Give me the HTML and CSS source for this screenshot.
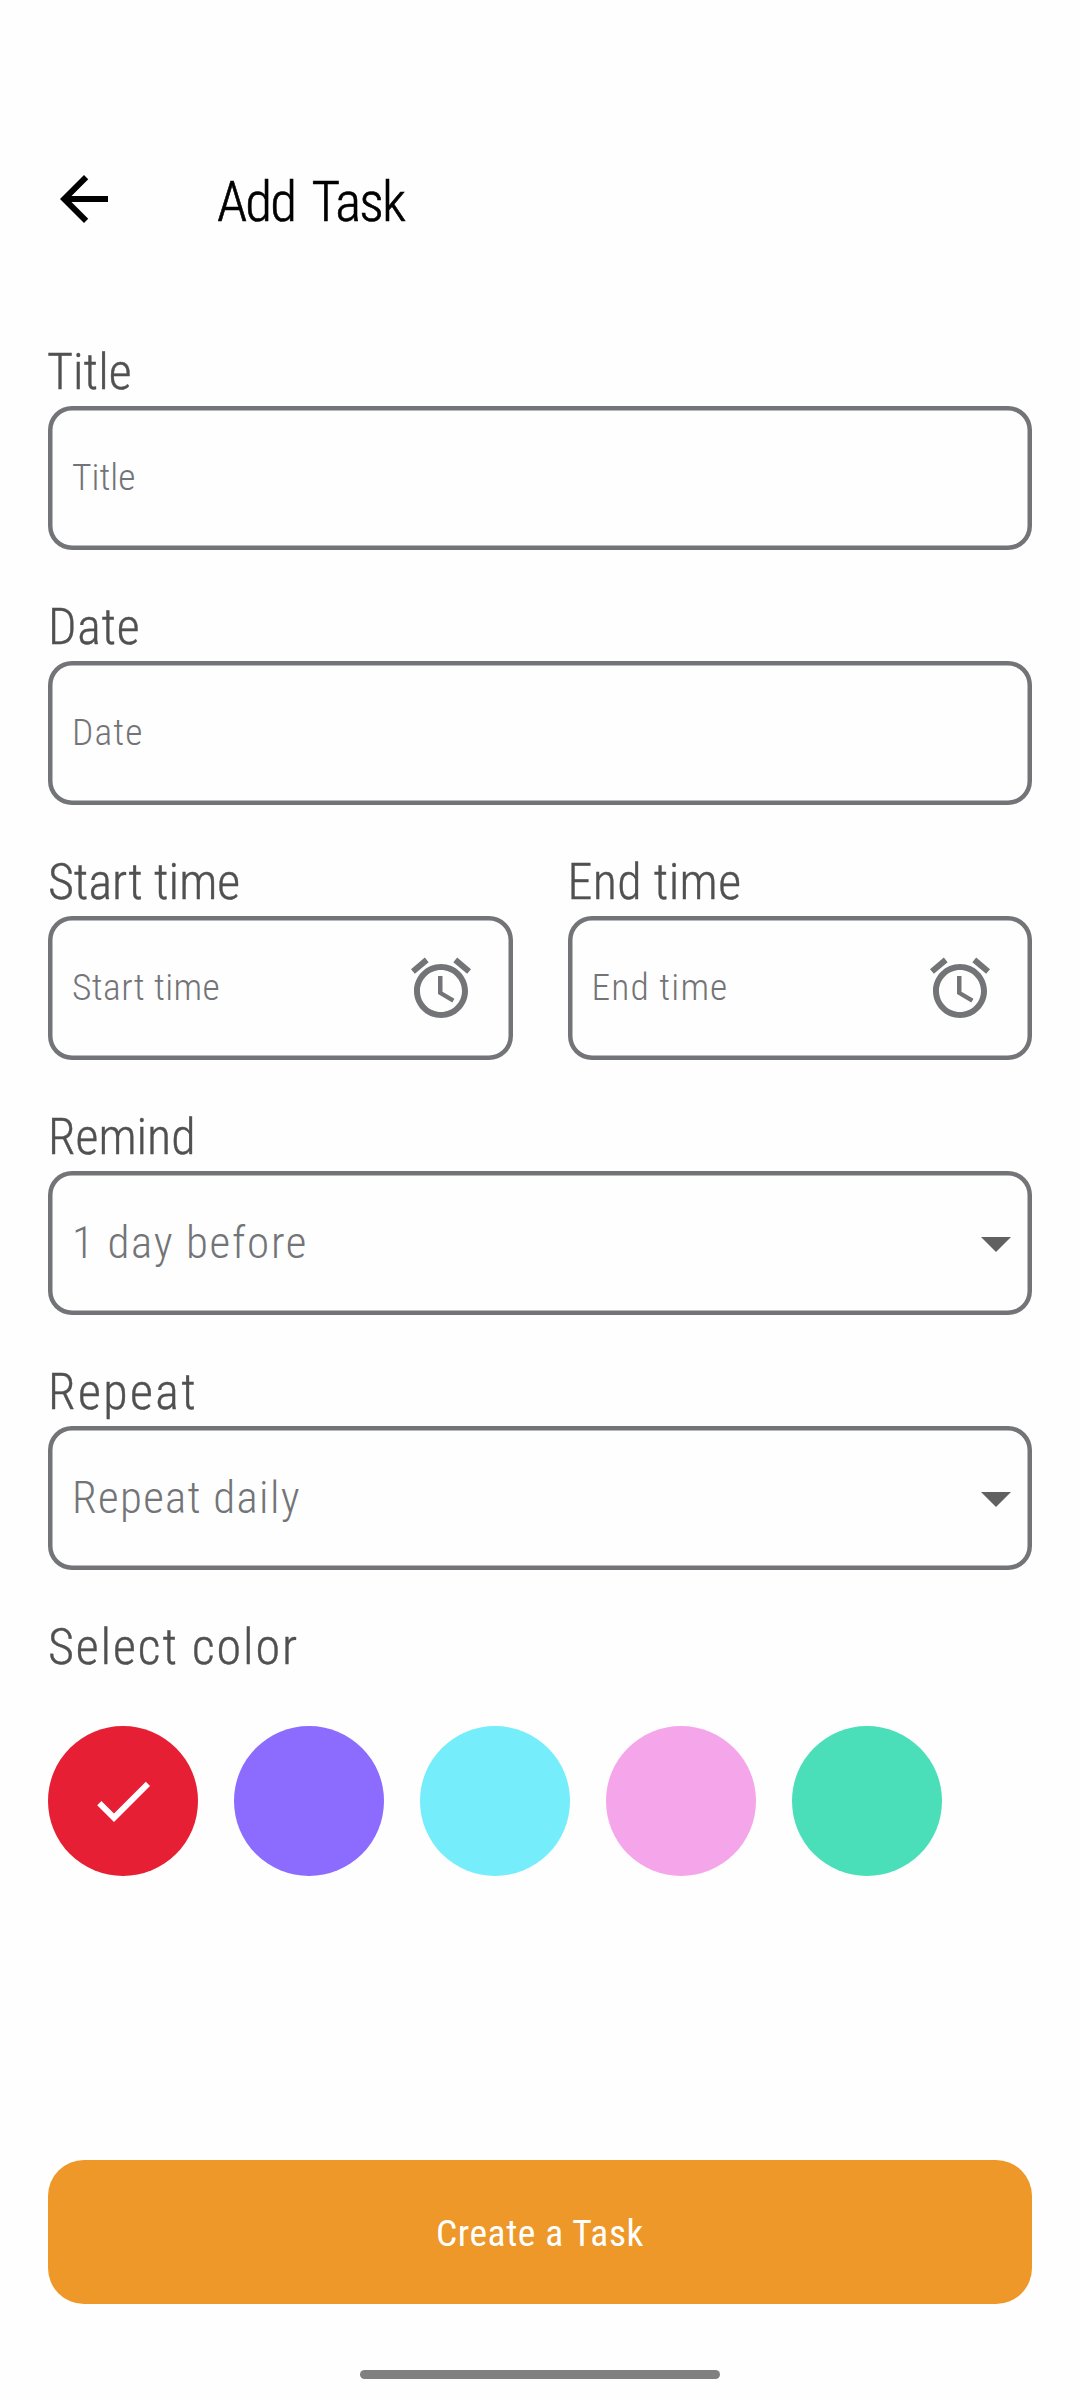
FILE: index.html
```html
<!DOCTYPE html>
<html lang="en">
<head>
<meta charset="utf-8">
<title>Add Task</title>
<link rel="stylesheet" href="styles.css">
</head>
<body>
<svg class="sprite" aria-hidden="true">
  <symbol id="alarm" viewBox="0 0 24 24"><path d="M22 5.72l-4.6-3.86-1.29 1.53 4.6 3.86L22 5.72zM7.88 3.39L6.6 1.86 2 5.71l1.29 1.53 4.59-3.85zM12.5 8H11v6l4.75 2.85.75-1.23-4-2.37V8zM12 4c-4.97 0-9 4.03-9 9s4.02 9 9 9c4.97 0 9-4.03 9-9s-4.03-9-9-9zm0 16c-3.87 0-7-3.13-7-7s3.13-7 7-7 7 3.13 7 7-3.13 7-7 7z"/></symbol>
  <symbol id="drop" viewBox="0 0 24 24"><path d="M7 10l5 5 5-5z"/></symbol>
</svg>
<div class="screen">
  <header class="bar">
    <svg class="icon" viewBox="0 0 24 24"><path d="M20 11H7.83l5.59-5.59L12 4l-8 8 8 8 1.41-1.41L7.83 13H20v-2z"/></svg>
    <h1 class="heading">Add Task</h1>
  </header>

  <main class="form">
    <div class="field">
      <div class="label label-title">Title</div>
      <div class="box"><span class="hint">Title</span></div>
    </div>
    <div class="field">
      <div class="label label-date">Date</div>
      <div class="box"><span class="hint hint-wide">Date</span></div>
    </div>
    <div class="pair">
      <div class="field">
        <div class="label">Start time</div>
        <div class="box box-time"><span class="hint hint-start">Start time</span><svg class="icon"><use href="#alarm"/></svg></div>
      </div>
      <div class="field">
        <div class="label label-end">End time</div>
        <div class="box box-time"><span class="hint hint-wide">End time</span><svg class="icon"><use href="#alarm"/></svg></div>
      </div>
    </div>
    <div class="field">
      <div class="label">Remind</div>
      <div class="box"><span class="value value-remind">1 day before</span><svg class="icon icon-drop"><use href="#drop"/></svg></div>
    </div>
    <div class="field">
      <div class="label label-repeat">Repeat</div>
      <div class="box"><span class="value">Repeat daily</span><svg class="icon icon-drop"><use href="#drop"/></svg></div>
    </div>
    <div class="colors">
      <div class="label label-color">Select color</div>
      <div class="swatches">
        <div class="swatch red"><svg class="icon" viewBox="0 0 24 24"><path d="M9 16.2L4.8 12l-1.4 1.4L9 19 21 7l-1.4-1.4L9 16.2z"/></svg></div>
        <div class="swatch violet"></div>
        <div class="swatch cyan"></div>
        <div class="swatch pink"></div>
        <div class="swatch green"></div>
      </div>
    </div>
  </main>

  <div class="create">Create a Task</div>
  <div class="home"></div>
</div>
</body>
</html>
```
FILE: styles.css
```css
* { box-sizing: border-box; }

body {
  margin: 0;
  background: #fefefe;
  font-family: Roboto, "Open Sans", sans-serif;
  font-weight: 300;
  font-stretch: 75%;
  color: #505050;
}

.sprite { display: none; }

.screen {
  display: flex;
  flex-direction: column;
  width: 1080px;
  height: 2400px;
  padding: 163px 48px 21px;
}

.icon {
  flex: none;
  width: 72px;
  height: 72px;
  fill: currentColor;
}

.bar {
  display: flex;
  align-items: center;
  gap: 97px;
  height: 72px;
  color: #000;
}

.heading {
  margin: 0;
  padding-top: 6px;
  font-size: 55px;
  font-weight: 300;
  line-height: 68px;
  letter-spacing: -1.9px;
  word-spacing: 7px;
  -webkit-text-stroke: 0.6px #000;
}

.form {
  display: flex;
  flex-direction: column;
  gap: 43px;
  margin-top: 103px;
}

.pair {
  display: grid;
  grid-template-columns: 1fr 1fr;
  gap: 55px;
}

.label {
  font-size: 50px;
  line-height: 68px;
  -webkit-text-stroke: 0.4px #505050;
}
.label-title { margin-left: -1px; }
.label-date { letter-spacing: 0.7px; }
.label-end { letter-spacing: 0.4px; }
.label-repeat { letter-spacing: 2.4px; }
.label-color { letter-spacing: 1.9px; }

.box {
  display: flex;
  align-items: center;
  justify-content: space-between;
  height: 144px;
  padding-left: 24px;
  border-radius: 24px;
  box-shadow: inset 0 0 0 4.5px #737477;
  color: #737477;
}
.box-time { padding-right: 36px; }

.hint {
  padding-bottom: 2px;
  font-size: 37.5px;
}
.hint-start { letter-spacing: 0.4px; }
.hint-wide { letter-spacing: 1.1px; }

.value {
  padding-bottom: 2px;
  font-size: 45px;
  letter-spacing: 1.3px;
}
.value-remind { letter-spacing: 1.7px; }

.icon-drop { color: #616161; }

.swatches {
  display: flex;
  gap: 36px;
  margin-top: 45px;
}
.swatch {
  display: grid;
  place-items: center;
  width: 150px;
  height: 150px;
  border-radius: 50%;
  color: #fff;
}
.red { background: #e61f34; }
.violet { background: #8c6bff; }
.cyan { background: #76edfb; }
.pink { background: #f5a5ea; }
.green { background: #4adfb9; }

.create {
  display: flex;
  align-items: center;
  justify-content: center;
  height: 144px;
  margin-top: auto;
  padding-top: 1px;
  border-radius: 36px;
  background: #ed9828;
  color: #fff;
  font-size: 37.5px;
  font-weight: 400;
  letter-spacing: 0.6px;
}

.home {
  align-self: center;
  width: 360px;
  height: 9px;
  margin-top: 66px;
  border-radius: 5px;
  background: #808080;
}
```
